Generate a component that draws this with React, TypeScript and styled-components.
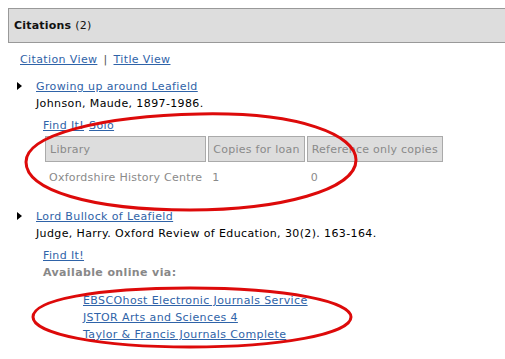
import React from "react";
import styled, { createGlobalStyle } from "styled-components";

const Global = createGlobalStyle`
  html, body { margin: 0; padding: 0; background: #fff; }
  body {
    padding: 8px 0 0 8px;
    overflow: hidden;
    font-family: "DejaVu Sans", Verdana, sans-serif;
    font-size: 11px;
    letter-spacing: 0.38px;
    color: #000;
  }
`;

const Page = styled.div`
  position: relative;
  width: 497px;
  height: 351px;
`;

const Header = styled.div`
  display: flex;
  align-items: center;
  height: 33px;
  margin-right: -20px;
  padding-left: 5px;
  background: #dddddd;
  border: 1px solid #999;
  font-size: 11px;
  letter-spacing: 0.2px;
  color: #111;
`;

const HeaderTitle = styled.span`
  font-weight: bold;
  margin-right: 4px;
`;

const Link = styled.a`
  color: #2f63a8;
  text-decoration: underline;
  cursor: pointer;
`;

const ViewBar = styled.div`
  margin: 8px 0 0 12px;
  line-height: 17px;
  display: flex;
  gap: 6px;
  color: #555;
`;

const List = styled.ul`
  list-style: none;
  margin: 10px 0 0;
  padding: 0;
`;

const Item = styled.li<{ $gap?: number }>`
  position: relative;
  padding-left: 28px;
  line-height: 17px;
  margin-bottom: ${(p) => p.$gap ?? 0}px;
`;

const Bullet = styled.span`
  position: absolute;
  left: 9px;
  top: 4px;
  width: 0;
  height: 0;
  border-top: 4px solid transparent;
  border-bottom: 4px solid transparent;
  border-left: 5px solid #000;
`;

const Actions = styled.div`
  margin: 5px 0 0 7px;
  display: flex;
  gap: 5px;
`;

const Holdings = styled.table`
  margin-left: 7px;
  border-spacing: 2px;
  font-size: 11px;
  letter-spacing: 0.25px;
  color: #8a8a8a;
`;

const Th = styled.th<{ $w: number }>`
  width: ${(p) => p.$w}px;
  box-sizing: border-box;
  height: 26px;
  padding: 0 4px;
  text-align: left;
  font-weight: normal;
  background: #dddddd;
  border: 1px solid #aaa;
  white-space: nowrap;
`;

const Td = styled.td`
  height: 26px;
  padding: 0 4px;
  white-space: nowrap;
  color: #8a8a8a;
`;

const OnlineLabel = styled.div`
  margin-left: 7px;
  font-weight: bold;
  color: #888;
`;

const OnlineList = styled.div`
  margin: 11px 0 0 47px;
  display: flex;
  flex-direction: column;
  align-items: flex-start;
`;

const Annotations = styled.svg`
  position: absolute;
  left: -8px;
  top: -8px;
  pointer-events: none;
`;

export default function App() {
  return (
    <Page>
      <Global />
      <Header>
        <HeaderTitle>Citations</HeaderTitle>
        <span>(2)</span>
      </Header>
      <ViewBar>
        <Link>Citation View</Link>
        <span>|</span>
        <Link>Title View</Link>
      </ViewBar>
      <List>
        <Item $gap={16}>
          <Bullet />
          <Link>Growing up around Leafield</Link>
          <div>Johnson, Maude, 1897-1986.</div>
          <Actions>
            <Link>Find It!</Link>
            <Link>Solo</Link>
          </Actions>
          <Holdings>
            <thead>
              <tr>
                <Th $w={161}>Library</Th>
                <Th $w={95}>Copies for loan</Th>
                <Th $w={135}>Reference only copies</Th>
              </tr>
            </thead>
            <tbody>
              <tr>
                <Td>Oxfordshire History Centre</Td>
                <Td>1</Td>
                <Td>0</Td>
              </tr>
            </tbody>
          </Holdings>
        </Item>
        <Item>
          <Bullet />
          <Link>Lord Bullock of Leafield</Link>
          <div>Judge, Harry. Oxford Review of Education, 30(2). 163-164.</div>
          <Actions>
            <Link>Find It!</Link>
          </Actions>
          <OnlineLabel>Available online via:</OnlineLabel>
          <OnlineList>
            <Link>EBSCOhost Electronic Journals Service</Link>
            <Link>JSTOR Arts and Sciences 4</Link>
            <Link>Taylor &amp; Francis Journals Complete</Link>
          </OnlineList>
        </Item>
      </List>
      <Annotations width="505" height="359" viewBox="0 0 505 359">
        <path
          d="M 200 114 C 300 112 356 135 356 160 C 356 190 280 210 190 210 C 90 210 26 190 26 162 C 26 135 100 116 200 114 Z"
          fill="none"
          stroke="#dd0a0a"
          strokeWidth="3"
        />
        <path
          d="M 190 288 C 290 288 351 302 351 317 C 351 334 280 347 190 347 C 100 347 33 334 33 317 C 33 300 95 288 190 288 Z"
          fill="none"
          stroke="#dd0a0a"
          strokeWidth="3"
        />
      </Annotations>
    </Page>
  );
}
